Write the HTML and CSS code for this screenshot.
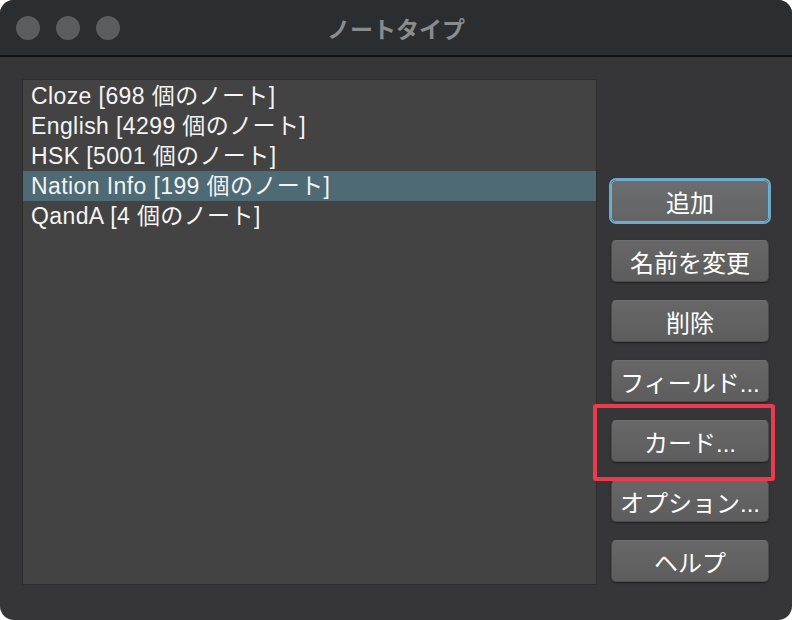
FILE: index.html
```html
<!DOCTYPE html>
<html lang="ja">
<head>
  <meta charset="UTF-8">
  <title>ノートタイプ</title>
  <link rel="stylesheet" href="styles.css">
</head>
<body>
  <div class="window">
    <div class="titlebar">
      <div class="lights">
        <span class="light"></span>
        <span class="light"></span>
        <span class="light"></span>
      </div>
      <div class="title">ノートタイプ</div>
    </div>
    <div class="content">
      <ul class="list">
        <li>Cloze [698 個のノート]</li>
        <li>English [4299 個のノート]</li>
        <li>HSK [5001 個のノート]</li>
        <li class="selected">Nation Info [199 個のノート]</li>
        <li>QandA [4 個のノート]</li>
      </ul>
      <div class="buttons">
        <button class="btn default">追加</button>
        <button class="btn">名前を変更</button>
        <button class="btn">削除</button>
        <button class="btn">フィールド...</button>
        <div class="marked">
          <button class="btn">カード...</button>
          <span class="highlight"></span>
        </div>
        <button class="btn">オプション...</button>
        <button class="btn">ヘルプ</button>
      </div>
    </div>
  </div>
</body>
</html>
```

FILE: styles.css
```css
body {
  margin: 0;
  background: #ffffff;
  font-family: "Liberation Sans", "Noto Sans CJK JP", sans-serif;
}
.window {
  width: 792px;
  height: 620px;
  background: #363638;
  border-radius: 14px;
  overflow: hidden;
}
.titlebar {
  position: relative;
  height: 55px;
  background: #2b2e30;
  border-bottom: 2px solid #111213;
  display: flex;
  align-items: center;
}
.lights {
  display: flex;
  gap: 16px;
  padding-left: 16px;
}
.light {
  width: 24px;
  height: 24px;
  border-radius: 50%;
  background: #5b5e60;
}
.title {
  position: absolute;
  left: 0;
  right: 0;
  text-align: center;
  color: #8a8c8d;
  font-size: 23px;
  font-weight: bold;
}
.content {
  display: flex;
  padding: 22px 0 0 22px;
}
.list {
  list-style: none;
  margin: 0;
  padding: 1px 0 0 0;
  width: 573px;
  height: 503px;
  background: #434343;
  border: 1px solid #2d2d2e;
}
.list li {
  height: 30px;
  line-height: 30px;
  padding-left: 8px;
  color: #f4f4f4;
  font-size: 23px;
  letter-spacing: 0.4px;
}
.list li.selected {
  background: #4d6a75;
}
.buttons {
  display: flex;
  flex-direction: column;
  gap: 18px;
  padding: 101px 0 0 14px;
}
.btn {
  width: 158px;
  height: 42px;
  padding: 0;
  border: 1px solid #4c4c4c;
  border-top-color: #707070;
  border-radius: 5px;
  background: linear-gradient(#676767, #5d5d5d);
  box-shadow: 0 1px 2px rgba(0, 0, 0, 0.45);
  color: #ffffff;
  font-family: "Liberation Sans", "Noto Sans CJK JP", sans-serif;
  font-size: 24px;
  white-space: nowrap;
}
.btn.default {
  background: linear-gradient(#6b6d6f, #626466);
  border-color: #6fb0cf;
  box-shadow: 0 0 0 2px #6aaacb;
}
.marked {
  position: relative;
  height: 42px;
}
.highlight {
  position: absolute;
  left: -18px;
  top: -16px;
  width: 174px;
  height: 69px;
  border: 4px solid #ee3a4d;
  border-radius: 3px;
}
```
